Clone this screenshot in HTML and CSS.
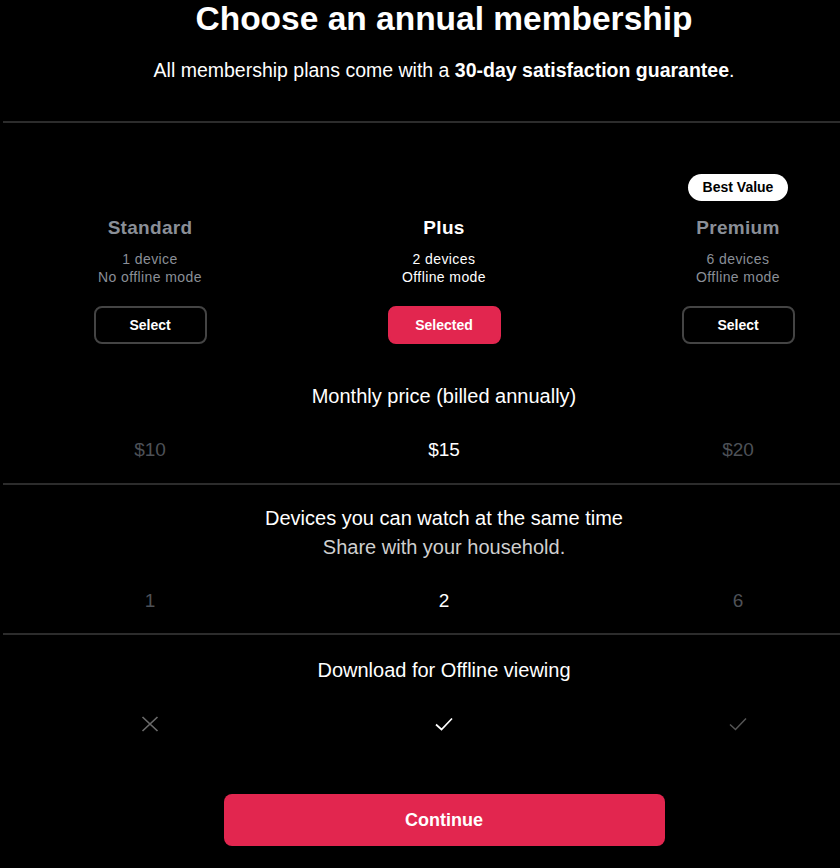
FILE: index.html
```html
<!DOCTYPE html>
<html lang="en">
<head>
<meta charset="utf-8">
<title>Choose an annual membership</title>
<link rel="stylesheet" href="styles.css">
</head>
<body>
<main class="page">
  <header class="intro">
    <h1 class="title">Choose an annual membership</h1>
    <p class="subtitle">All membership plans come with a <strong>30-day satisfaction guarantee</strong>.</p>
  </header>

  <section class="plans">
    <div class="plan">
      <div class="badge-slot"></div>
      <h2 class="plan-name">Standard</h2>
      <p class="plan-desc">1 device<br>No offline mode</p>
      <button class="btn-select">Select</button>
    </div>
    <div class="plan plan-active">
      <div class="badge-slot"></div>
      <h2 class="plan-name">Plus</h2>
      <p class="plan-desc">2 devices<br>Offline mode</p>
      <button class="btn-select btn-selected">Selected</button>
    </div>
    <div class="plan">
      <div class="badge-slot"><span class="badge">Best Value</span></div>
      <h2 class="plan-name">Premium</h2>
      <p class="plan-desc">6 devices<br>Offline mode</p>
      <button class="btn-select">Select</button>
    </div>
  </section>

  <section class="feature feature-price">
    <h3 class="feature-title">Monthly price (billed annually)</h3>
    <div class="values">
      <span class="val">$10</span>
      <span class="val val-active">$15</span>
      <span class="val">$20</span>
    </div>
  </section>

  <section class="feature feature-devices">
    <h3 class="feature-title">Devices you can watch at the same time</h3>
    <p class="feature-sub">Share with your household.</p>
    <div class="values">
      <span class="val">1</span>
      <span class="val val-active">2</span>
      <span class="val">6</span>
    </div>
  </section>

  <section class="feature feature-offline">
    <h3 class="feature-title">Download for Offline viewing</h3>
    <div class="values values-icons">
      <span class="val icon-no"><svg class="ico" viewBox="0 0 18 18" width="18" height="18"><path d="M1.5 2 L16.5 16 M16.5 2 L1.5 16" fill="none" stroke="currentColor" stroke-width="1.7"/></svg></span>
      <span class="val val-active"><svg class="ico" viewBox="0 0 18 18" width="18" height="18"><path d="M1 9.5 L6.5 14.5 L17 3.5" fill="none" stroke="currentColor" stroke-width="1.7"/></svg></span>
      <span class="val icon-yes"><svg class="ico" viewBox="0 0 18 18" width="18" height="18"><path d="M1 9.5 L6.5 14.5 L17 3.5" fill="none" stroke="currentColor" stroke-width="1.5"/></svg></span>
    </div>
  </section>

  <div class="actions">
    <button class="btn-continue">Continue</button>
  </div>
</main>
</body>
</html>
```

FILE: styles.css
```css
html, body {
  margin: 0;
  padding: 0;
  background: #000;
  overflow: hidden;
}
body {
  font-family: "Liberation Sans", Arial, sans-serif;
  color: #fff;
}
.page {
  width: 882px;
  margin-left: 3px;
}
.intro {
  text-align: center;
  border-bottom: 2px solid #2c2c2c;
  padding-bottom: 37px;
}
.title {
  margin: 0;
  font-size: 33.5px;
  line-height: 38px;
  font-weight: 700;
}
.subtitle {
  margin: 18px 0 0;
  font-size: 19.5px;
  line-height: 28px;
  font-weight: 400;
}
.subtitle strong {
  font-weight: 700;
}
.plans {
  display: grid;
  grid-template-columns: repeat(3, 1fr);
  padding-top: 50px;
}
.plan {
  display: flex;
  flex-direction: column;
  align-items: center;
  text-align: center;
  color: #8a8f97;
}
.plan-active {
  color: #fff;
}
.badge-slot {
  height: 28px;
  display: flex;
  align-items: center;
  justify-content: center;
}
.badge {
  display: inline-block;
  background: #fff;
  color: #000;
  font-size: 14px;
  font-weight: 700;
  line-height: 27px;
  padding: 0 14px;
  border-radius: 14px;
  width: 72px;
  text-align: center;
}
.plan-name {
  margin: 15px 0 0;
  font-size: 19px;
  line-height: 24px;
  font-weight: 700;
  letter-spacing: 0.3px;
}
.plan-desc {
  margin: 10px 0 0;
  font-size: 14px;
  line-height: 18px;
  letter-spacing: 0.4px;
}
.btn-select {
  margin-top: 20px;
  width: 113px;
  height: 38px;
  border: 2px solid #444;
  border-radius: 8px;
  background: #000;
  color: #fff;
  font-family: "Liberation Sans", Arial, sans-serif;
  font-size: 14px;
  font-weight: 700;
  cursor: pointer;
}
.btn-selected {
  background: #e2264f;
  border-color: #e2264f;
}
.feature {
  text-align: center;
  border-bottom: 2px solid #2c2c2c;
}
.feature-price {
  padding-top: 40px;
  padding-bottom: 21px;
}
.feature-devices {
  padding-top: 21px;
  padding-bottom: 20px;
}
.feature-offline {
  border-bottom: 0;
  padding-top: 23px;
}
.feature-title {
  margin: 0;
  font-size: 20px;
  line-height: 24px;
  font-weight: 400;
}
.feature-sub {
  margin: 5px 0 0;
  font-size: 20px;
  line-height: 24px;
  color: #cfcfcf;
}
.values {
  display: grid;
  grid-template-columns: repeat(3, 1fr);
  margin-top: 30px;
}
.val {
  font-size: 19px;
  line-height: 24px;
  color: #4d5157;
  display: flex;
  justify-content: center;
  align-items: center;
}
.val-active {
  color: #fff;
}
.values-icons {
  margin-top: 33px;
}
.icon-no {
  color: #6a6a6a;
}
.icon-yes {
  color: #555;
}
.ico {
  display: block;
}
.actions {
  display: flex;
  justify-content: center;
  padding-top: 61px;
}
.btn-continue {
  width: 441px;
  height: 52px;
  border: 0;
  border-radius: 8px;
  background: #e2264f;
  color: #fff;
  font-family: "Liberation Sans", Arial, sans-serif;
  font-size: 18px;
  font-weight: 700;
  cursor: pointer;
}
```
